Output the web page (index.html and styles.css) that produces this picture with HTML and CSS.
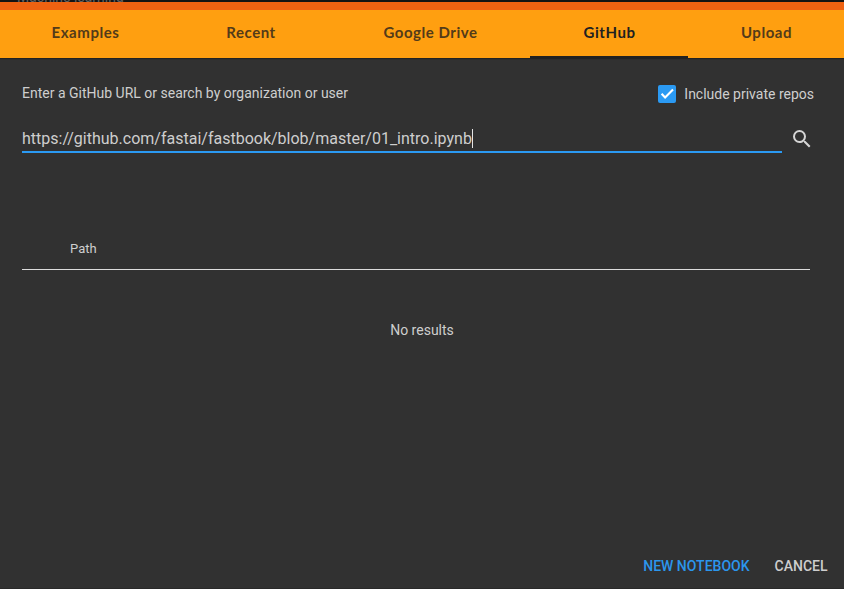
FILE: index.html
```html
<!DOCTYPE html>
<html lang="en">
<head>
<meta charset="utf-8">
<title>Open notebook</title>
<link rel="stylesheet" href="styles.css">
</head>
<body>
<div class="backdrop"><span>Machine learning</span></div>
<main class="dialog">
  <nav class="tabs">
    <a class="tab examples">Examples</a>
    <a class="tab recent">Recent</a>
    <a class="tab drive">Google Drive</a>
    <a class="tab github active">GitHub</a>
    <a class="tab upload">Upload</a>
  </nav>
  <section class="content">
    <div class="options">
      <span class="hint">Enter a GitHub URL or search by organization or user</span>
      <label class="private">
        <span class="checkbox"><svg viewBox="0 0 18 18" width="18" height="18"><path d="M3.6 8.8 7.1 12.4 15 4.5" fill="none" stroke="#fff" stroke-width="2.1"/></svg></span>
        <span class="private-text">Include private repos</span>
      </label>
    </div>
    <div class="search">
      <div class="field"><span class="url">https://github.com/fastai/fastbook/blob/master/01_intro.ipynb</span><span class="caret"></span></div>
      <svg class="search-icon" viewBox="0 0 24 24" width="24" height="24"><path fill="#d5d5d5" d="M15.5 14h-.79l-.28-.27A6.47 6.47 0 0 0 16 9.5 6.5 6.5 0 1 0 9.5 16c1.61 0 3.09-.59 4.23-1.57l.27.28v.79l5 4.99L20.49 19l-4.99-5zm-6 0C7.01 14 5 11.99 5 9.5S7.01 5 9.5 5 14 7.01 14 9.5 11.99 14 9.5 14z"/></svg>
    </div>
    <div class="table-head"><span class="path">Path</span></div>
    <p class="empty"><span class="empty-text">No results</span></p>
  </section>
  <footer class="actions">
    <span class="action new">NEW NOTEBOOK</span>
    <span class="action cancel">CANCEL</span>
  </footer>
</main>
</body>
</html>
```
FILE: styles.css
```css
* { box-sizing: border-box; }
body {
  margin: 0;
  width: 844px;
  height: 589px;
  overflow: hidden;
  display: flex;
  flex-direction: column;
  background: #313131;
  color: #cecece;
  font-family: Roboto, sans-serif;
}
.backdrop {
  height: 2px;
  flex: none;
  overflow: hidden;
  background: #131313;
  color: #626262;
  font: 14px/16px Roboto, sans-serif;
  padding-left: 17px;
}
.backdrop span { display: block; margin-top: -11px; }
.dialog {
  flex: 1;
  display: flex;
  flex-direction: column;
  border-top: 8px solid #ee6211;
  border-bottom: 1px solid #292929;
}
.tabs {
  flex: none;
  height: 48px;
  display: grid;
  grid-template-columns: 170px 161px 199px 158px 156px;
  background: #ff9f10;
  box-shadow: 0 1px 1px #222;
}
.tab {
  display: flex;
  align-items: center;
  justify-content: center;
  padding: 0 0 2px 1px;
  color: #533b19;
  font: 700 15px/20px Lato, sans-serif;
  letter-spacing: .55px;
  border-bottom: 2px solid transparent;
}
.drive { padding-left: 0; }
.active { color: #212121; border-bottom-color: #212121; }
.content {
  flex: 1;
  display: flex;
  flex-direction: column;
  padding: 24px 30px 0 22px;
}
.options {
  display: flex;
  align-items: center;
  justify-content: space-between;
  height: 24px;
}
.hint { font-size: 14px; line-height: 22px; padding-bottom: 2px; }
.private {
  display: flex;
  align-items: center;
  gap: 8px;
  font-size: 14px;
}
.checkbox { width: 18px; height: 18px; border-radius: 2px; background: #2b9af3; }
.checkbox svg { display: block; }
.search {
  display: flex;
  align-items: flex-start;
  gap: 8px;
  margin-top: 20px;
}
.field {
  width: 760px;
  height: 27px;
  display: flex;
  align-items: flex-start;
  border-bottom: 2px solid #2b9af3;
  font-size: 16px;
  line-height: 25px;
}
.caret { width: 1px; height: 19px; margin: 3px 0 0 .5px; background: #e4e4e4; }
.search-icon { display: block; margin-top: 1px; }
.table-head {
  width: 788px;
  height: 43px;
  margin-top: 74px;
  padding-left: 48px;
  border-bottom: 1px solid #dcdcdc;
  font-size: 13px;
  line-height: 44px;
}
.empty {
  width: 800px;
  margin: 50px 0 0;
  text-align: center;
  font-size: 14px;
  line-height: 20px;
}
.actions {
  display: flex;
  justify-content: flex-end;
  gap: 25px;
  padding: 0 16.5px 13px;
  font-size: 14px;
  font-weight: 500;
  line-height: 18px;
}
.new { color: #2b96ed; }
```
